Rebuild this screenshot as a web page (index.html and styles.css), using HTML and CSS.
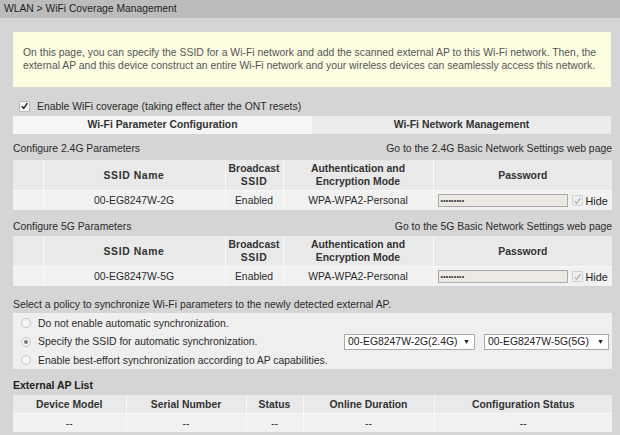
FILE: index.html
```html
<!DOCTYPE html>
<html>
<head>
<meta charset="utf-8">
<link rel="stylesheet" href="styles.css">
</head>
<body>
<div class="topbar">WLAN &gt; WiFi Coverage Management</div>
<div class="content">
  <div class="notice">On this page, you can specify the SSID for a Wi-Fi network and add the scanned external AP to this Wi-Fi network. Then, the external AP and this device construct an entire Wi-Fi network and your wireless devices can seamlessly access this network.</div>

  <div class="enable"><span class="cb"><svg viewBox="0 0 10 10" width="10" height="10"><path d="M2 5.2 L4.2 7.6 L8.2 1.8" fill="none" stroke="#222" stroke-width="1.6"/></svg></span>Enable WiFi coverage (taking effect after the ONT resets)</div>

  <div class="tabs">
    <div class="tab tab-active">Wi-Fi Parameter Configuration</div>
    <div class="tab">Wi-Fi Network Management</div>
  </div>

  <div class="sec-head sec-first"><span>Configure 2.4G Parameters</span><span>Go to the 2.4G Basic Network Settings web page</span></div>
  <table class="grid">
    <colgroup><col class="c1"><col class="c2"><col class="c3"><col class="c4"><col class="c5"></colgroup>
    <tr class="hd"><th></th><th class="sp">SSID Name</th><th>Broadcast<br><span class="sp">SSID</span></th><th>Authentication and<br>Encryption Mode</th><th>Password</th></tr>
    <tr class="dt"><td></td><td>00-EG8247W-2G</td><td>Enabled</td><td>WPA-WPA2-Personal</td><td class="pw"><span class="pwbox">&#8226;&#8226;&#8226;&#8226;&#8226;&#8226;&#8226;&#8226;&#8226;</span><span class="cb cb-dis"><svg viewBox="0 0 10 10" width="10" height="10"><path d="M2 5.2 L4.2 7.6 L8.2 1.8" fill="none" stroke="#b5b5b5" stroke-width="1.6"/></svg></span><span class="hide">Hide</span></td></tr>
  </table>

  <div class="sec-head"><span>Configure 5G Parameters</span><span>Go to the 5G Basic Network Settings web page</span></div>
  <table class="grid">
    <colgroup><col class="c1"><col class="c2"><col class="c3"><col class="c4"><col class="c5"></colgroup>
    <tr class="hd"><th></th><th class="sp">SSID Name</th><th>Broadcast<br><span class="sp">SSID</span></th><th>Authentication and<br>Encryption Mode</th><th>Password</th></tr>
    <tr class="dt"><td></td><td>00-EG8247W-5G</td><td>Enabled</td><td>WPA-WPA2-Personal</td><td class="pw"><span class="pwbox">&#8226;&#8226;&#8226;&#8226;&#8226;&#8226;&#8226;&#8226;&#8226;</span><span class="cb cb-dis"><svg viewBox="0 0 10 10" width="10" height="10"><path d="M2 5.2 L4.2 7.6 L8.2 1.8" fill="none" stroke="#b5b5b5" stroke-width="1.6"/></svg></span><span class="hide">Hide</span></td></tr>
  </table>

  <div class="policy-title">Select a policy to synchronize Wi-Fi parameters to the newly detected external AP.</div>
  <div class="options">
    <div class="opt"><span class="radio"></span><span>Do not enable automatic synchronization.</span></div>
    <div class="opt opt-sel"><span class="radio radio-on"></span><span class="opt-label">Specify the SSID for automatic synchronization.</span>
      <span class="sel sel1">00-EG8247W-2G(2.4G)<span class="arr">&#9660;</span></span>
      <span class="sel sel2">00-EG8247W-5G(5G)<span class="arr">&#9660;</span></span>
    </div>
    <div class="opt"><span class="radio"></span><span>Enable best-effort synchronization according to AP capabilities.</span></div>
  </div>

  <div class="ap-title">External AP List</div>
  <table class="grid ap">
    <colgroup><col class="a1"><col class="a2"><col class="a3"><col class="a4"><col class="a5"></colgroup>
    <tr class="hd"><th>Device Model</th><th>Serial Number</th><th>Status</th><th>Online Duration</th><th>Configuration Status</th></tr>
    <tr class="dt"><td>--</td><td>--</td><td>--</td><td>--</td><td>--</td></tr>
  </table>
</div>
</body>
</html>
```

FILE: styles.css
```css
html, body {
  margin: 0;
  padding: 0;
}
body {
  background: #d5d5d5;
  font-family: "Liberation Sans", Arial, sans-serif;
  font-size: 10.4px;
  color: #2b2b2b;
  width: 620px;
  height: 435px;
  overflow: hidden;
}
.topbar {
  height: 18px;
  line-height: 17px;
  background: #bcbcbc;
  padding-left: 4px;
  font-size: 10.3px;
  color: #1e1e1e;
}
.content {
  padding: 0 8px 0 13px;
}
.notice {
  margin-top: 14px;
  background: #fdfde2;
  color: #555;
  padding: 14px 10px 15px 10px;
  line-height: 13px;
  margin-right: 1px;
}
.enable {
  margin-top: 12px;
  height: 14px;
  display: flex;
  align-items: center;
  padding-left: 6px;
}
.cb {
  width: 9px;
  height: 9px;
  border: 1px solid #b9b9b9;
  background: #f4f4f4;
  display: inline-flex;
  align-items: center;
  justify-content: center;
  margin-right: 7px;
  border-radius: 1px;
}
.cb svg {
  width: 10px;
  height: 10px;
}
.tabs {
  margin-top: 3px;
  height: 18px;
  display: flex;
  margin-right: 1px;
}
.tab {
  flex: 1;
  text-align: center;
  line-height: 18px;
  font-weight: bold;
  background: #ebebeb;
  color: #333;
}
.tab-active {
  background: #f6f6f6;
}
.sec-head {
  display: flex;
  justify-content: space-between;
  height: 14px;
  line-height: 14px;
  margin-top: 10px;
  margin-bottom: 2px;
}
.sec-first {
  margin-top: 8px;
  margin-bottom: 4px;
}
.grid {
  width: 599px;
  border-collapse: collapse;
  table-layout: fixed;
}
.grid th, .grid td {
  border: 1px solid #f9f9f9;
  text-align: center;
  padding: 0;
}
.grid th {
  background: #e9e9e9;
  font-weight: bold;
  color: #333;
  line-height: 13px;
}
.grid td {
  background: #f1f1f1;
}
.grid tr:first-child th { border-top: none; height: 30px; }
.grid tr:last-child td { border-bottom: none; height: 19px; }
.grid th:first-child, .grid td:first-child { border-left: none; }
.grid th:last-child, .grid td:last-child { border-right: none; }
.sp { letter-spacing: 0.6px; }
.c1 { width: 30px; }
.c2 { width: 182px; }
.c3 { width: 58px; }
.c4 { width: 150px; }
.c5 { width: 179px; }
.pw {
  text-align: left !important;
  white-space: nowrap;
}
.pwbox {
  display: inline-block;
  vertical-align: middle;
  margin-left: 4px;
  width: 126px;
  height: 11px;
  line-height: 11px;
  border: 1px solid #a9a9a9;
  background: #ece9e2;
  font-size: 7px;
  letter-spacing: 0.2px;
  padding-left: 2px;
  color: #333;
  box-sizing: content-box;
}
.cb-dis {
  vertical-align: middle;
  margin-left: 4px;
  margin-right: 3px;
  border-color: #d0d0d0;
  background: #eeeeee;
}
.hide {
  vertical-align: middle;
  font-size: 10.8px;
  color: #222;
}
.policy-title {
  margin-top: 12px;
  height: 14px;
  line-height: 14px;
}
.options {
  margin-top: 1px;
  background: #efefef;
  padding: 1px 0 0 0;
  width: 599px;
}
.opt {
  display: flex;
  align-items: center;
  height: 18px;
  padding-left: 8px;
}
.opt-sel {
  height: 19px;
}
.opt-label {
  width: 306px;
}
.radio {
  width: 8px;
  height: 8px;
  border-radius: 50%;
  border: 1px solid #c6c6c6;
  background: #f4f4f4;
  margin-right: 7px;
  display: inline-flex;
  align-items: center;
  justify-content: center;
}
.radio-on::after {
  content: "";
  width: 4px;
  height: 4px;
  border-radius: 50%;
  background: #7a7a7a;
}
.sel {
  display: inline-flex;
  align-items: center;
  justify-content: space-between;
  height: 14px;
  border: 1px solid #a9a9a9;
  background: #fff;
  padding: 0 4px 0 3px;
  box-sizing: content-box;
  color: #222;
}
.sel1 { width: 122px; }
.sel2 { width: 116px; margin-left: 9px; }
.arr {
  font-size: 7px;
  color: #222;
}
.ap-title {
  margin-top: 9px;
  height: 14px;
  line-height: 14px;
  font-weight: bold;
  font-size: 10.5px;
  color: #222;
}
.grid.ap {
  margin-top: 3px;
}
.grid.ap tr:first-child th {
  height: 18px;
  line-height: 17px;
}
.grid.ap tr:last-child td {
  height: 18px;
}
.a1 { width: 113px; }
.a2 { width: 120px; }
.a3 { width: 57px; }
.a4 { width: 131px; }
.a5 { width: 178px; }
```
